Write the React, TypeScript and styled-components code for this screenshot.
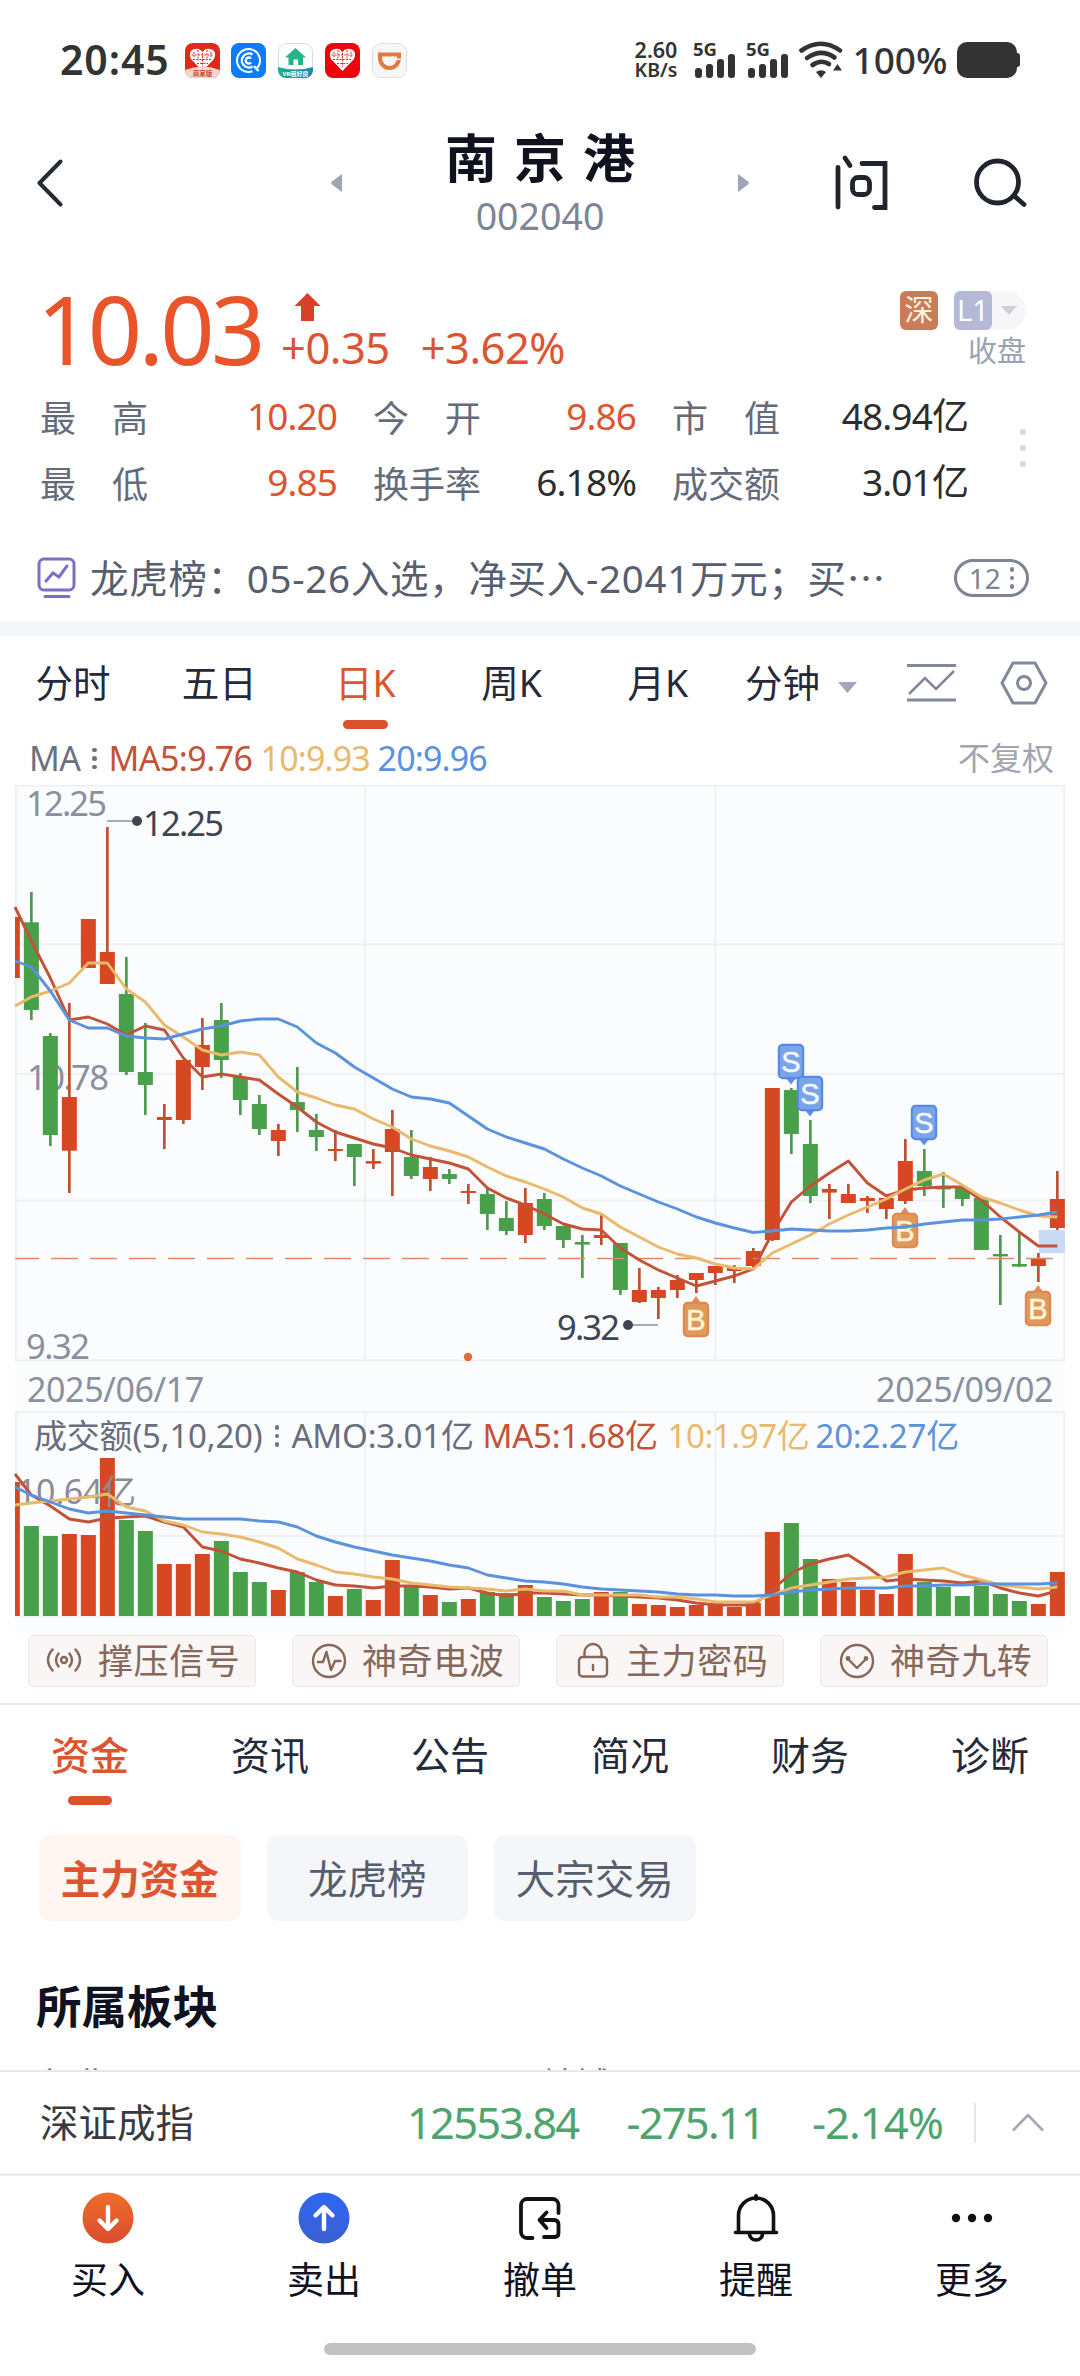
import React from "react";
import styled, { createGlobalStyle } from "styled-components";

const RED = "#dc5430";
const UP = "#d64822";
const DOWN = "#49a04a";
const MA5 = "#c35237";
const MA10 = "#e9b96c";
const MA20 = "#5a92dd";

const Global = createGlobalStyle`
  *, *::before, *::after { box-sizing: border-box; }
  body {
    margin: 0;
    background: #fff;
    font-family: "Noto Sans", "Noto Sans CJK SC", sans-serif;
    color: #242a3a;
  }
  svg { display: block; flex: none; }
`;

const Screen = styled.div`
  width: 1080px;
  height: 2376px;
  overflow: hidden;
  background: #fff;
  display: flex;
  flex-direction: column;
`;

const Label = styled.span<{ size: number; color?: string; weight?: number; track?: number; lh?: number; w?: number }>`
  font-size: ${(p) => p.size}px;
  line-height: ${(p) => p.lh ?? p.size * 1.2}px;
  color: ${(p) => p.color ?? "inherit"};
  font-weight: ${(p) => p.weight ?? 400};
  letter-spacing: ${(p) => p.track ?? 0}px;
  width: ${(p) => (p.w ? `${p.w}px` : "auto")};
  white-space: nowrap;
`;

/* ---------- status bar ---------- */
const StatusBar = styled.div`
  height: 120px;
  flex: none;
  padding: 0 60px 0 60px;
  display: flex;
  align-items: center;
  color: #333;
`;
const AppIcons = styled.div`
  display: flex;
  gap: 11.8px;
  margin-left: 15px;
`;
const StatusRight = styled.div`
  margin-left: auto;
  display: flex;
  align-items: center;
`;
const Speed = styled.div`
  display: flex;
  flex-direction: column;
  align-items: center;
  width: 46px;
  margin-right: 14px;
`;
const Signals = styled.div`
  display: flex;
  gap: 10px;
  margin-right: 10px;
  svg {
    overflow: visible;
  }
`;
const Percent = styled(Label)`
  text-align: center;
`;

const Heart = () => (
  <g>
    <path d="M17.500 28 L6 16 Q3 9 8 6.500 Q14 4 17.500 9 Q21 4 27 6.500 Q32 9 29 16 Z" fill="#fff" />
    <path
      d="M9 9v5m4-7v10m4.500-7v14m4.500-17v10m4-8v5M6.500 12h22M8 16.500h19M12 20.500h11"
      stroke="#e3261b"
      strokeWidth="1"
      strokeDasharray="2 1.200"
      fill="none"
    />
  </g>
);

const AppIcon = ({ kind }: { kind: number }) => (
  <svg width="35" height="35" viewBox="0 0 35 35">
    <defs>
      <clipPath id={`app${kind}`}>
        <rect width="35" height="35" rx="8" />
      </clipPath>
      <linearGradient id="vr" x1="0" x2="1" y1="0" y2="0">
        <stop offset="0" stopColor="#20b08c" />
        <stop offset="1" stopColor="#1e86b4" />
      </linearGradient>
    </defs>
    <g clipPath={`url(#app${kind})`}>
      {kind === 0 && (
        <>
          <rect width="35" height="35" fill="#df2a17" />
          <Heart />
          <path d="M0 27 Q17.500 20 35 27 V35 H0Z" fill="#fbd5cc" />
          <text x="17.500" y="33" fontSize="6.500" fontWeight="700" fill="#c4492f" textAnchor="middle">商家版</text>
        </>
      )}
      {kind === 1 && (
        <>
          <rect width="35" height="35" fill="#0b7bff" />
          <circle cx="17.500" cy="17.500" r="11.500" fill="none" stroke="#fff" strokeWidth="2" strokeDasharray="66 7" transform="rotate(70 17.500 17.500)" />
          <path d="M21.500 11.500a7 7 0 1 0 0 12M20 15.500a3 3 0 1 0 0 4M23 23l4.500 5" fill="none" stroke="#fff" strokeWidth="2.400" />
        </>
      )}
      {kind === 2 && (
        <>
          <rect x=".5" y=".5" width="34" height="34" rx="8" fill="#fff" stroke="#dcdcdc" />
          <path d="M17.500 5 L28 14.500 H25 V22 H20 V16.500 H15.500 V22 H10.500 V14.500 H7Z" fill="#25b388" />
          <path d="M0 24 Q17.500 29 35 24 V35 H0Z" fill="url(#vr)" />
          <text x="17.500" y="33" fontSize="6" fontWeight="700" fill="#fff" textAnchor="middle">VR租好房</text>
        </>
      )}
      {kind === 3 && (
        <>
          <rect width="35" height="35" fill="#f2000c" />
          <Heart />
        </>
      )}
      {kind === 4 && (
        <>
          <rect x=".5" y=".5" width="34" height="34" rx="8" fill="#f7f7f7" stroke="#dedede" />
          <path d="M8 11.500 H27 V15 A9.500 10 0 0 1 8 15Z" fill="none" stroke="#e27a3c" strokeWidth="4" />
          <path d="M20.500 13 v3.200 h8.500" stroke="#f7f7f7" strokeWidth="1.600" fill="none" />
        </>
      )}
    </g>
  </svg>
);

const Signal = () => (
  <svg width="43" height="38" viewBox="0 0 43 38">
    <text x="0" y="14.500" fontSize="18.500" fontWeight="700" fill="#333" textLength="24">5G</text>
    {[10, 14, 19, 24].map((h, i) => (
      <rect key={i} x={2 + i * 11} y={37 - h} width="7" height={h} rx="3" fill="#333" />
    ))}
  </svg>
);

const Wifi = () => (
  <svg width="44" height="38" viewBox="0 0 44 38">
    <g fill="none" stroke="#333" strokeWidth="4.600" strokeLinecap="round">
      <path d="M2.500 9.500 Q22 -4 41 9.500" />
      <path d="M8 17 Q22 7 35.500 16.500" />
      <path d="M13.500 24 Q22 18 30 23" />
    </g>
    <path d="M17 31 Q22 27.500 27 31 L22 37Z" fill="#333" />
    <path d="M34 29.500 L38.500 23 L43 29.500Z" fill="#333" />
  </svg>
);

/* ---------- title bar ---------- */
const TitleBar = styled.header`
  height: 140px;
  flex: none;
  display: grid;
  grid-template-columns: 331px 418px 331px;
`;
const BackCell = styled.div`
  padding: 39px 0 0 35px;
`;
const TitleCell = styled.div`
  display: flex;
  justify-content: space-between;
`;
const Arrow = styled.div`
  padding-top: 54px;
`;
const Names = styled.div`
  display: flex;
  flex-direction: column;
  align-items: center;
  padding-top: 5px;
`;
const StockName = styled(Label)`
  margin-right: -17px;
`;
const Actions = styled.div`
  display: flex;
  padding: 34px 51px 0 84px;
  justify-content: space-between;
`;

/* ---------- quote ---------- */
const Quote = styled.section`
  height: 285px;
  flex: none;
`;
const PriceRow = styled.div`
  display: flex;
  height: 123px;
  padding-left: 37px;
  padding-right: 54px;
`;
const Price = styled.div`
  font-size: 95px;
  line-height: 120px;
  padding-top: 8px;
  letter-spacing: -3.6px;
  color: #e9542b;
  width: 245px;
`;
const Change = styled.div`
  display: flex;
  flex-direction: column;
  padding-top: 33px;
`;
const ChangeVals = styled.div`
  display: flex;
  gap: 31px;
  margin-top: -2px;
  margin-left: -1px;
`;
const Badges = styled.div`
  margin-left: auto;
  display: flex;
  flex-direction: column;
  align-items: flex-end;
  padding-top: 31px;
`;
const BadgeRow = styled.div`
  display: flex;
  align-items: center;
  gap: 16px;
  height: 39px;
`;
const Pill = styled.div`
  display: flex;
  align-items: center;
  width: 72px;
  height: 39px;
  background: #f6f6f9;
  border-radius: 8px 20px 20px 8px;
  gap: 9px;
`;
const Badge = styled.div<{ bg: string; fg: string }>`
  width: 38px;
  height: 39px;
  border-radius: 6px;
  background: ${(p) => p.bg};
  color: ${(p) => p.fg};
  font-size: 29px;
  line-height: 38px;
  text-align: center;
`;
const StatsRow = styled.div`
  display: flex;
`;
const Stats = styled.div`
  display: grid;
  grid-template-columns: 333px 299px 296px;
  grid-auto-rows: 66px;
  padding-left: 40px;
`;
const Stat = styled.div<{ pad: number }>`
  display: flex;
  justify-content: space-between;
  align-items: center;
  padding-right: ${(p) => p.pad}px;
  font-size: 36px;
`;
const StatName = styled.div`
  width: 108px;
  display: flex;
  justify-content: space-between;
  color: #646b7a;
`;
const MoreDots = styled.div`
  display: flex;
  flex-direction: column;
  gap: 10px;
  padding: 46px 0 0 52px;
  i {
    width: 6px;
    height: 6px;
    border-radius: 3px;
    background: #d2d6dd;
  }
`;

/* ---------- news ---------- */
const News = styled.div`
  height: 76px;
  flex: none;
  display: flex;
  align-items: center;
  padding: 0 51px 10px 37px;
`;
const NewsText = styled.div`
  flex: 1;
  margin-left: 13px;
  font-size: 38.5px;
  letter-spacing: 0.7px;
  line-height: 56px;
  color: #575e6e;
  white-space: nowrap;
`;
const Count = styled.div`
  width: 75px;
  height: 38px;
  border: 3px solid #7d8494;
  border-radius: 19px;
  color: #7d8494;
  display: flex;
  align-items: center;
  justify-content: center;
  gap: 9px;
  font-size: 28px;
`;
const Band = styled.div`
  height: 15px;
  flex: none;
  background: #f4f6fa;
`;

/* ---------- period tabs ---------- */
const Periods = styled.nav`
  height: 100px;
  flex: none;
  display: flex;
`;
const Period = styled.div<{ on?: boolean }>`
  width: 146.2px;
  display: flex;
  flex-direction: column;
  align-items: center;
  padding-top: 20px;
  font-size: 37.5px;
  line-height: 54px;
  color: ${(p) => (p.on ? RED : "#242a3a")};
  &::after {
    content: "";
    width: 45px;
    height: 9px;
    margin-top: 10px;
    border-radius: 4.5px;
    background: ${(p) => (p.on ? "#db5230" : "transparent")};
  }
`;
const Minutes = styled.div`
  display: flex;
  gap: 18px;
  padding: 20px 0 0 14px;
  font-size: 37.5px;
  line-height: 54px;
  width: 176px;
  svg {
    margin-top: 26px;
  }
`;
const IndicatorIcon = styled.div`
  padding-top: 27px;
`;
const SettingsIcon = styled.div`
  padding: 25px 0 0 43px;
`;
const IndicatorRow = styled.div`
  height: 49px;
  flex: none;
  display: flex;
  align-items: center;
  padding: 0 26px 4px 29px;
`;
const FarRight = styled(Label)`
  margin-left: auto;
`;
const KebabBox = styled.span<{ w: number }>`
  width: ${(p) => p.w}px;
  display: flex;
  justify-content: center;
  color: #6a7180;
`;
const Kebab = styled.span`
  display: inline-flex;
  flex-direction: column;
  gap: 4px;
  i {
    width: 4.5px;
    height: 4.5px;
    border-radius: 2.5px;
    background: currentColor;
  }
`;

/* ---------- charts ---------- */
const ChartPanel = styled.section`
  width: 1050px;
  margin-left: 15px;
  height: 849px;
  flex: none;
  background: #fbfcfe;
  svg {
    overflow: visible;
  }
`;
const Dates = styled.div`
  height: 51px;
  display: flex;
  justify-content: space-between;
  align-items: center;
  padding: 5px 12px 0 12px;
`;
const Volume = styled.div`
  display: grid;
  & > * {
    grid-area: 1 / 1;
  }
`;
const VolumeHead = styled.div`
  height: 48px;
  display: flex;
  align-items: center;
  padding-left: 19px;
`;

type Candle = [string, number, number, number, number, number];
// direction, body top, body bottom, high, low, volume bar top
const candles: Candle[] = [
  ["r", 132, 193, 132, 193, 70], ["g", 137.3, 225, 107, 235, 114], ["g", 251, 350, 248, 361, 124],
  ["r", 312, 365.7, 218, 408, 122], ["r", 134, 183, 134, 183, 123], ["r", 167, 199, 42, 199, 46],
  ["g", 209, 287, 172, 290, 108], ["g", 287, 300, 238, 330, 119], ["r", 332, 335, 319, 364, 152],
  ["r", 275, 335, 275, 339, 152], ["r", 260, 282, 233, 305, 142], ["g", 235, 275, 218, 293, 129],
  ["g", 292, 315, 288, 330, 160], ["g", 319, 344, 310, 350, 170], ["r", 345, 356, 339, 371, 178],
  ["g", 317, 325, 282, 347, 160], ["g", 345, 352, 329, 366, 170], ["r", 364, 366, 345, 376, 184],
  ["g", 359, 372, 359, 401, 177], ["r", 376, 378.6, 364, 384, 188], ["r", 344, 367, 325, 411, 148],
  ["g", 372, 391, 345, 394, 174], ["r", 382, 394, 372, 406, 183], ["g", 389, 394, 384, 399, 190],
  ["r", 406, 408, 399, 419, 187], ["g", 409, 429, 403, 445, 180], ["g", 433, 446, 416, 450, 181],
  ["r", 418, 450, 403, 458, 173], ["g", 414, 441, 408, 445, 185], ["g", 441, 455, 441, 463, 189],
  ["g", 457, 459.6, 450, 493, 187], ["r", 450, 453, 428, 460, 180], ["g", 458, 505, 458, 510, 180],
  ["r", 505, 517, 483, 518, 192], ["r", 505, 513, 502, 534, 193], ["r", 495, 505, 490, 513, 195],
  ["r", 488, 495, 488, 508, 193], ["r", 481, 488, 481, 500, 191], ["r", 482, 486, 480, 498, 195],
  ["r", 466, 481, 463, 482, 191], ["r", 303, 455, 303, 456, 120], ["g", 305, 349, 303, 369, 111],
  ["g", 359, 411, 335, 418, 147], ["r", 404, 407.6, 399, 434, 167], ["r", 409, 418, 399, 418, 170],
  ["r", 413, 416, 411, 428, 178], ["r", 413, 424, 413, 434, 182], ["r", 376, 416, 354, 419, 142],
  ["g", 386, 401, 364, 411, 170], ["g", 402, 404.4, 387, 423, 175], ["g", 403, 414, 403, 421, 184],
  ["g", 413, 465, 413, 465, 174], ["g", 469, 471.4, 450, 520, 182], ["g", 479, 481.6, 448, 482, 189],
  ["r", 473, 481, 468, 497, 192], ["r", 414, 443, 386, 445, 160],
];
const price5 = [122, 156, 193, 235, 232, 239, 250, 241, 245, 273, 292, 289, 292, 295, 309, 322, 337, 347, 353, 359, 363, 370, 374, 378, 384, 403, 413, 420, 429, 439, 444, 445, 463, 475, 485, 493, 501, 496, 491, 484, 448, 417, 401, 388, 376, 398, 411, 405, 403, 402, 402, 415, 432, 447, 461, 461];
const price10 = [221, 212, 206, 198, 178, 178, 204, 217, 240, 252, 265, 270, 267, 270, 292, 307, 313, 320, 324, 334, 342, 354, 361, 366, 372, 382, 391, 397, 404, 412, 423, 429, 442, 452, 462, 469, 473, 479, 483, 484, 468, 459, 450, 439, 430, 422, 414, 404, 395, 389, 400, 412, 418, 425, 431, 432];
const price20 = [176, 182, 206, 235, 243, 243, 251, 253, 254, 249, 244, 241, 236, 234, 234, 242, 258, 268, 282, 293, 304, 312, 314, 318, 331, 344, 352, 358, 364, 374, 383, 391, 401, 409, 417, 424, 432, 438, 443, 447.5, 446, 444, 445, 446, 446, 445, 443, 442, 439, 437, 435, 435, 434, 432, 430, 427];
const vol5 = [62, 83, 94, 107, 110, 106, 105, 104, 110, 115, 135, 139, 147, 151, 156, 160, 168, 173, 174, 176, 174, 174, 175, 177, 176, 181, 184, 181, 181, 182, 183, 183, 184, 185, 186, 188, 191, 193, 193, 193, 178, 161, 152, 147, 143, 155, 169, 167, 168, 169, 171, 169, 176, 181, 184, 179];
const vol10 = [93, 91, 89, 87, 85, 82, 95, 99, 109, 113, 120, 122, 125, 130, 136, 147, 153, 160, 162, 165, 167, 171, 173, 175, 176, 177, 179, 177, 179, 179, 183, 183, 183, 183, 185, 185, 187, 190, 190, 190, 183, 176, 173, 170, 167, 166, 165, 160, 158, 156, 163, 168, 173, 175, 177, 175];
const vol20 = [75, 83, 90, 97, 101, 99, 101, 103, 105, 107, 107, 107, 107, 109, 110, 115, 124, 130, 135, 139, 143, 146, 149, 153, 156, 163, 166, 169, 170, 172, 175, 177, 178, 179, 180, 182, 183, 183, 184, 184, 183, 180, 178, 177, 176, 176, 176, 174, 174, 173, 173, 172, 172, 172, 172, 171];

const cx = (i: number) => 12.35 + i * 19;
const bodyLeft = (i: number) => Math.max(15, cx(i) - 7.5);
const bodyWidth = (i: number) => cx(i) + 7.5 - bodyLeft(i);
const points = (ys: number[]) => ys.map((y, i) => `${i === 0 ? 15 : cx(i)},${y}`).join(" ");

const Averages = ({ sets }: { sets: number[][] }) => (
  <g fill="none" strokeWidth="2.900" strokeLinejoin="round">
    <polyline points={points(sets[0])} stroke={MA5} />
    <polyline points={points(sets[1])} stroke={MA10} />
    <polyline points={points(sets[2])} stroke={MA20} />
  </g>
);

const Marker = ({ x, y, kind }: { x: number; y: number; kind: "S" | "B" }) => {
  const sell = kind === "S";
  const ink = sell ? "#f2f8ff" : "#fff5d6";
  return (
    <g transform={`translate(${x} ${y})`}>
      <path
        d={sell ? "M-5 34 L0 40.500 L5 34Z" : "M-5 1 L0 -6 L5 1Z"}
        fill={sell ? "#5f8fe6" : "#e08a58"}
      />
      <rect
        x="-12.200"
        y=".8"
        width="24.400"
        height="33.400"
        rx="4"
        fill={sell ? "#7ba3ea" : "#dd9a5c"}
        stroke={sell ? "#5486e6" : "#e2854f"}
        strokeWidth="2"
      />
      <text y="27.500" fontSize="29" fontFamily="Liberation Sans, sans-serif" textAnchor="middle" fill={ink} stroke={ink} strokeWidth=".5">
        {kind}
      </text>
    </g>
  );
};

const PriceChart = () => (
  <svg width="1050" height="576" viewBox="15 0 1050 576">
    <g stroke="#eceef1" strokeWidth="1.600">
      <path d="M15.800 0V576M365.300 0V575M715.300 0V575M1064.200 0V576" />
      <path d="M15 .8H1065M15 159.300H1065M15 289H1065M15 415.500H1065M15 575.200H1065" />
    </g>
    <g fontSize="34.500" fill="#8a909e">
      <text x="26" y="30.500" textLength="81">12.25</text>
      <text x="27" y="304.500" textLength="82">10.78</text>
      <text x="26" y="573.500" textLength="64">9.32</text>
    </g>
    <rect x="1039" y="445" width="26" height="23" fill="#c9daf7" />
    {candles.map(([d, t, b, h, l], i) => (
      <g key={i} fill={d === "r" ? UP : DOWN}>
        {i > 0 && <rect x={cx(i) - 1.35} y={h} width="2.700" height={l - h} fill={d === "r" ? "#bd5134" : "#4f9a50"} />}
        <rect x={bodyLeft(i)} y={t} width={bodyWidth(i)} height={b - t} />
      </g>
    ))}
    <path d="M15 473.500H1053" stroke="#dd8b61" strokeWidth="1.500" strokeDasharray="27 12" strokeDashoffset="3" />
    <Marker x={791} y={259} kind="S" />
    <Marker x={810} y={291} kind="S" />
    <Marker x={924} y={320} kind="S" />
    <Marker x={696} y={517} kind="B" />
    <Marker x={905} y={428} kind="B" />
    <Marker x={1038} y={506} kind="B" />
    <Averages sets={[price5, price10, price20]} />
    <g stroke="#8b909c" strokeWidth="1.500">
      <path d="M107 36H137M628 540H658" />
    </g>
    <g fill="#404553">
      <circle cx="137" cy="36" r="5" />
      <circle cx="628" cy="540" r="5" />
      <g fontSize="34.500">
        <text x="143" y="50.500" textLength="81">12.25</text>
        <text x="557" y="554.500" textLength="63">9.32</text>
      </g>
    </g>
    <circle cx="468" cy="572" r="4.200" fill="#df6b37" />
  </svg>
);

const VolumeChart = () => (
  <svg width="1050" height="222" viewBox="15 0 1050 222">
    <g stroke="#eceef1" strokeWidth="1.600">
      <path d="M15.800 0V204M365.300 0V204M715.300 0V204M1064.200 0V204" />
      <path d="M15 0H1065M15 124H1065M15 204.500H1065" />
    </g>
    {candles.map(([d, , , , , v], i) => (
      <rect key={i} x={bodyLeft(i)} y={v} width={bodyWidth(i)} height={204 - v} fill={d === "r" ? UP : DOWN} />
    ))}
    <text x="17" y="91.500" fontSize="34" fill="#8a8b94" textLength="119">10.64亿</text>
    <Averages sets={[vol5, vol10, vol20]} />
  </svg>
);

/* ---------- signal chips ---------- */
const SignalChips = styled.div`
  height: 69px;
  flex: none;
  display: flex;
  justify-content: space-between;
  padding: 1px 32px 0 28px;
`;
const SignalChip = styled.div`
  width: 228px;
  height: 52px;
  border: 1.5px solid #ece5e3;
  border-radius: 5px;
  background: #f9f6f5;
  display: flex;
  align-items: center;
  padding-left: 17px;
  gap: 14px;
  font-size: 35px;
  line-height: 48px;
  letter-spacing: 0.6px;
  color: #86675a;
  white-space: nowrap;
`;

const ChipIcon = ({ kind }: { kind: number }) => (
  <svg width="38" height="38" viewBox="0 0 38 38" fill="none" stroke="#86675a" strokeWidth="2.400" strokeLinecap="round" strokeLinejoin="round">
    {kind === 0 && (
      <>
        <circle cx="18" cy="18" r="3" />
        <path d="M12.500 11.500q-5 6.500 0 13M23.500 11.500q5 6.500 0 13M6.500 7.500q-9 10.500 0 21M29.500 7.500q9 10.500 0 21" />
      </>
    )}
    {kind === 1 && (
      <>
        <circle cx="19" cy="19" r="16" />
        <path d="M8 20h5l3.500-10 4.500 18 4-9h5.500" />
      </>
    )}
    {kind === 2 && (
      <>
        <rect x="5" y="15" width="28" height="19.500" rx="3.500" />
        <path d="M10.500 15v-4.500a8.500 8.500 0 0 1 17 0V15M19 23v5" />
      </>
    )}
    {kind === 3 && (
      <>
        <circle cx="19" cy="19" r="16" />
        <path d="M10 17l9 9 9-9" />
        <circle cx="10" cy="16.500" r="1.200" fill="#86675a" />
        <circle cx="28" cy="16.500" r="1.200" fill="#86675a" />
      </>
    )}
  </svg>
);

/* ---------- content tabs ---------- */
const Tabs = styled.nav`
  height: 131px;
  flex: none;
  display: grid;
  grid-template-columns: repeat(6, 180px);
  border-top: 2px solid #e9e9eb;
`;
const Tab = styled.div<{ on?: boolean }>`
  display: flex;
  flex-direction: column;
  align-items: center;
  padding-top: 22px;
  font-size: 39px;
  line-height: 56px;
  font-weight: ${(p) => (p.on ? 500 : 400)};
  color: ${(p) => (p.on ? RED : "#242a3a")};
  &::after {
    content: "";
    width: 44px;
    height: 9px;
    margin-top: 13px;
    border-radius: 4.5px;
    background: ${(p) => (p.on ? "#db5230" : "transparent")};
  }
`;
const SubTabs = styled.div`
  display: flex;
  gap: 26px;
  padding: 1px 0 0 39px;
  height: 139px;
  flex: none;
`;
const SubTab = styled.div<{ on?: boolean }>`
  width: 201.500px;
  height: 86px;
  border-radius: 11px;
  text-align: center;
  font-size: 39.5px;
  line-height: 88px;
  background: ${(p) => (p.on ? "#fff5f1" : "#f4f6fa")};
  color: ${(p) => (p.on ? RED : "#565d6d")};
  font-weight: ${(p) => (p.on ? 700 : 400)};
`;
const Sector = styled.section`
  height: 97px;
  flex: none;
  overflow: hidden;
  padding-left: 36px;
`;
const SectorTitle = styled.h2`
  margin: 0;
  font-size: 45.5px;
  line-height: 67px;
  height: 91px;
  font-weight: 700;
  color: #10131f;
`;
const SectorCols = styled.div`
  display: flex;
  gap: 434px;
  padding-left: 4px;
  font-size: 34px;
  line-height: 40px;
  color: #70788a;
`;

/* ---------- index bar & bottom nav ---------- */
const IndexBar = styled.div`
  height: 103px;
  flex: none;
  border-top: 2px solid #e8e8ea;
  display: flex;
  align-items: center;
  padding-left: 40px;
`;
const IndexVals = styled.div`
  margin-left: auto;
  display: flex;
  gap: 48px;
`;
const Divider = styled.div`
  width: 2px;
  height: 40px;
  background: #e3e5ea;
  margin: 0 35px 0 31px;
`;
const BottomNav = styled.nav`
  height: 170px;
  flex: none;
  border-top: 3px solid #eee;
  display: grid;
  grid-template-columns: repeat(5, 216px);
`;
const NavItem = styled.div`
  display: flex;
  flex-direction: column;
  align-items: center;
  padding-top: 16px;
  font-size: 37px;
  line-height: 54px;
  gap: 9px;
  color: #10131f;
`;
const HomeBar = styled.div`
  width: 432px;
  height: 12px;
  border-radius: 6px;
  background: #c2c2c2;
  margin: 0 auto;
`;

const NavIcon = ({ kind }: { kind: number }) => (
  <svg width="52" height="52" viewBox="0 0 52 52" fill="none" strokeLinecap="round" strokeLinejoin="round">
    <defs>
      <linearGradient id="buy" x2="0" y2="1">
        <stop offset="0" stopColor="#ef6b2b" />
        <stop offset="1" stopColor="#d94e2e" />
      </linearGradient>
      <linearGradient id="sell" x2="0" y2="1">
        <stop offset="0" stopColor="#2f66f5" />
        <stop offset="1" stopColor="#3b60d0" />
      </linearGradient>
    </defs>
    {kind === 0 && (
      <>
        <circle cx="26" cy="26" r="25.500" fill="url(#buy)" />
        <path d="M26 15v21M17.500 28.500l8.500 8.500 8.500-8.500" stroke="#fff" strokeWidth="4.400" />
      </>
    )}
    {kind === 1 && (
      <>
        <circle cx="26" cy="26" r="25.500" fill="url(#sell)" />
        <path d="M26 37V16M17.500 23.500l8.500-8.500 8.500 8.500" stroke="#fff" strokeWidth="4.400" />
      </>
    )}
    {kind === 2 && (
      <path
        d="M44.500 21V13a6 6 0 0 0-6-6H13a6 6 0 0 0-6 6v27a6 6 0 0 0 6 6h5.500M32.500 20.500L25.500 28l7 8M26.500 28H40q4.500 0 4.500 5v8q0 4-4 4H30"
        stroke="#111"
        strokeWidth="3.800"
      />
    )}
    {kind === 3 && (
      <>
        <path d="M8.500 40V23.500a17.500 17.500 0 0 1 35 0V40M5.500 40.500h41" stroke="#111" strokeWidth="3.600" />
        <path d="M26 4v3" stroke="#111" strokeWidth="4" />
        <path d="M19.500 42a6.500 6 0 0 0 13 0" stroke="#111" strokeWidth="3.600" />
      </>
    )}
    {kind === 4 && (
      <g fill="#111">
        <circle cx="10" cy="26" r="4.200" />
        <circle cx="26" cy="26" r="4.200" />
        <circle cx="42" cy="26" r="4.200" />
      </g>
    )}
  </svg>
);

const stats: [string, string, string, number][] = [
  ["最高", "10.20", RED, 36], ["今开", "9.86", RED, 36], ["市值", "48.94亿", "#2d2d2d", 0],
  ["最低", "9.85", RED, 36], ["换手率", "6.18%", "#2d2d2d", 36], ["成交额", "3.01亿", "#2d2d2d", 0],
];

const Dots3 = () => (
  <>
    <i />
    <i />
    <i />
  </>
);

export default function App() {
  return (
    <Screen>
      <Global />
      <StatusBar>
        <Label size={41} weight={600} track={0.9}>20:45</Label>
        <AppIcons>
          {[0, 1, 2, 3, 4].map((k) => <AppIcon key={k} kind={k} />)}
        </AppIcons>
        <StatusRight>
          <Speed>
            <Label size={21.5} weight={600} lh={20}>2.60</Label>
            <Label size={19.5} weight={600} lh={20}>KB/s</Label>
          </Speed>
          <Signals>
            <Signal />
            <Signal />
          </Signals>
          <Wifi />
          <Percent size={37} weight={500} w={114}>100%</Percent>
          <svg width="63" height="36" viewBox="0 0 63 36">
            <rect width="60" height="36" rx="10" fill="#333" />
            <rect x="56" y="11" width="7" height="14" rx="3" fill="#333" />
          </svg>
        </StatusRight>
      </StatusBar>

      <TitleBar>
        <BackCell>
          <svg width="30" height="48" viewBox="0 0 30 48">
            <path d="M25.500 2.500L4.500 24l21 21.500" fill="none" stroke="#262a31" strokeWidth="4" strokeLinecap="round" strokeLinejoin="round" />
          </svg>
        </BackCell>
        <TitleCell>
          <Arrow>
            <svg width="11" height="18" viewBox="0 0 11 18"><path d="M11 0v18L1 10.500q-1.500-1.500 0-3Z" fill="#9ca4b5" /></svg>
          </Arrow>
          <Names>
            <StockName size={52} weight={700} color="#10131f" lh={66} track={17}>南京港</StockName>
            <Label size={37.5} color="#7d8494" lh={50}>002040</Label>
          </Names>
          <Arrow>
            <svg width="11" height="18" viewBox="0 0 11 18"><path d="M0 0v18L10 10.500q1.500-1.500 0-3Z" fill="#9ca4b5" /></svg>
          </Arrow>
        </TitleCell>
        <Actions>
          <svg width="56" height="58" viewBox="0 0 56 58" fill="none" stroke="#20242c" strokeWidth="4.800" strokeLinecap="round">
            <path d="M5 13.500V53M12 4l5 7.500M29 9.500h23V53.500H41.500" />
            <rect x="19.500" y="23.500" width="17" height="17" rx="5.500" />
          </svg>
          <svg width="56" height="56" viewBox="0 0 56 56" fill="none" stroke="#20242c" strokeWidth="4.800" strokeLinecap="round">
            <circle cx="24.500" cy="28" r="21" />
            <path d="M42 42.500l9 8" />
          </svg>
        </Actions>
      </TitleBar>

      <Quote>
        <PriceRow>
          <Price>10.03</Price>
          <Change>
            <svg width="50" height="30" viewBox="0 0 50 30">
              <path d="M25.500 0L38.500 13H32v15H19V13h-6.500Z" fill="#d8402a" />
            </svg>
            <ChangeVals>
              <Label size={43.5} color={RED} lh={52} track={-0.5}>+0.35</Label>
              <Label size={43.5} color={RED} lh={52} track={-0.5}>+3.62%</Label>
            </ChangeVals>
          </Change>
          <Badges>
            <BadgeRow>
              <Badge bg="#c97c58" fg="#fff3e6">深</Badge>
              <Pill>
                <Badge bg="#b5b9d6" fg="#fff">L1</Badge>
                <svg width="16" height="9" viewBox="0 0 16 9"><path d="M0 0h16L8 9Z" fill="#cdd0d4" /></svg>
              </Pill>
            </BadgeRow>
            <Label size={29} color="#9ba1af" lh={42}>收盘</Label>
          </Badges>
        </PriceRow>
        <StatsRow>
          <Stats>
            {stats.map(([name, value, color, pad]) => (
              <Stat key={name} pad={pad}>
                <StatName>
                  {name.split("").map((c) => <span key={c}>{c}</span>)}
                </StatName>
                <Label size={37} color={color} track={-0.9}>{value}</Label>
              </Stat>
            ))}
          </Stats>
          <MoreDots><Dots3 /></MoreDots>
        </StatsRow>
      </Quote>

      <News>
        <svg width="40" height="42" viewBox="0 0 40 42" fill="none" stroke="#7b70c4" strokeWidth="3">
          <rect x="2" y="2" width="35" height="31" rx="5" />
          <path d="M9 24l7-8 6 4 8-11M8 39.500h24" strokeLinecap="round" />
        </svg>
        <NewsText>龙虎榜：05-26入选，净买入-2041万元；买⋯</NewsText>
        <Count>
          12
          <Kebab><Dots3 /></Kebab>
        </Count>
      </News>
      <Band />

      <Periods>
        <Period>分时</Period>
        <Period>五日</Period>
        <Period on>日K</Period>
        <Period>周K</Period>
        <Period>月K</Period>
        <Minutes>
          分钟
          <svg width="19" height="11" viewBox="0 0 19 11"><path d="M0 0h19L9.500 11Z" fill="#a0a7b6" /></svg>
        </Minutes>
        <IndicatorIcon>
          <svg width="50" height="40" viewBox="0 0 50 40" fill="none" stroke="#81889a" strokeWidth="3">
            <path d="M0 2.500h49M0 37h49" />
            <path d="M2 31L18 15l11 11L47 8" strokeWidth="2.600" />
          </svg>
        </IndicatorIcon>
        <SettingsIcon>
          <svg width="48" height="44" viewBox="0 0 48 44" fill="none" stroke="#81889a" strokeWidth="3" strokeLinejoin="round">
            <path d="M13 2h22L46 22 35 42H13L2 22Z" />
            <circle cx="24" cy="22" r="6.500" />
          </svg>
        </SettingsIcon>
      </Periods>

      <IndicatorRow>
        <Label size={34} color="#6a7180" track={-0.5}>MA</Label>
        <KebabBox w={28}>
          <Kebab><Dots3 /></Kebab>
        </KebabBox>
        <Label size={34} color={MA5} track={-0.6} w={152}>MA5:9.76</Label>
        <Label size={34} color={MA10} track={-0.9} w={117}>10:9.93</Label>
        <Label size={34} color={MA20} track={-0.9}>20:9.96</Label>
        <FarRight size={32} color="#a0a5b1">不复权</FarRight>
      </IndicatorRow>

      <ChartPanel>
        <PriceChart />
        <Dates>
          <Label size={34} color="#8a909e" track={-0.4}>2025/06/17</Label>
          <Label size={34} color="#8a909e" track={-0.4}>2025/09/02</Label>
        </Dates>
        <Volume>
          <VolumeChart />
          <VolumeHead>
            <Label size={33} color="#676e7d" track={-0.2}>成交额(5,10,20)</Label>
            <KebabBox w={29}>
              <Kebab><Dots3 /></Kebab>
            </KebabBox>
            <Label size={33} color="#676e7d" w={191} track={-0.2}>AMO:3.01亿</Label>
            <Label size={33} color={MA5} w={185} track={-0.2}>MA5:1.68亿</Label>
            <Label size={33} color={MA10} w={148} track={-0.4}>10:1.97亿</Label>
            <Label size={33} color={MA20} track={-0.2}>20:2.27亿</Label>
          </VolumeHead>
        </Volume>
      </ChartPanel>

      <SignalChips>
        {["撑压信号", "神奇电波", "主力密码", "神奇九转"].map((t, i) => (
          <SignalChip key={t}>
            <ChipIcon kind={i} />
            {t}
          </SignalChip>
        ))}
      </SignalChips>

      <Tabs>
        {["资金", "资讯", "公告", "简况", "财务", "诊断"].map((t, i) => (
          <Tab key={t} on={i === 0}>{t}</Tab>
        ))}
      </Tabs>
      <SubTabs>
        <SubTab on>主力资金</SubTab>
        <SubTab>龙虎榜</SubTab>
        <SubTab>大宗交易</SubTab>
      </SubTabs>
      <Sector>
        <SectorTitle>所属板块</SectorTitle>
        <SectorCols>
          <span>行业</span>
          <span>地域</span>
        </SectorCols>
      </Sector>

      <IndexBar>
        <Label size={38.5} color="#3a3a3c">深证成指</Label>
        <IndexVals>
          <Label size={43.5} color="#4fa36c" track={-1.8}>12553.84</Label>
          <Label size={43.5} color="#4fa36c" track={-1.8}>-275.11</Label>
          <Label size={43.5} color="#4fa36c" track={-0.9}>-2.14%</Label>
        </IndexVals>
        <Divider />
        <svg width="69" height="20" viewBox="0 0 69 20">
          <path d="M2 17.500L17 2l15 15.500" fill="none" stroke="#a1a7b5" strokeWidth="2.600" />
        </svg>
      </IndexBar>
      <BottomNav>
        {["买入", "卖出", "撤单", "提醒", "更多"].map((t, i) => (
          <NavItem key={t}>
            <NavIcon kind={i} />
            {t}
          </NavItem>
        ))}
      </BottomNav>
      <HomeBar />
    </Screen>
  );
}
